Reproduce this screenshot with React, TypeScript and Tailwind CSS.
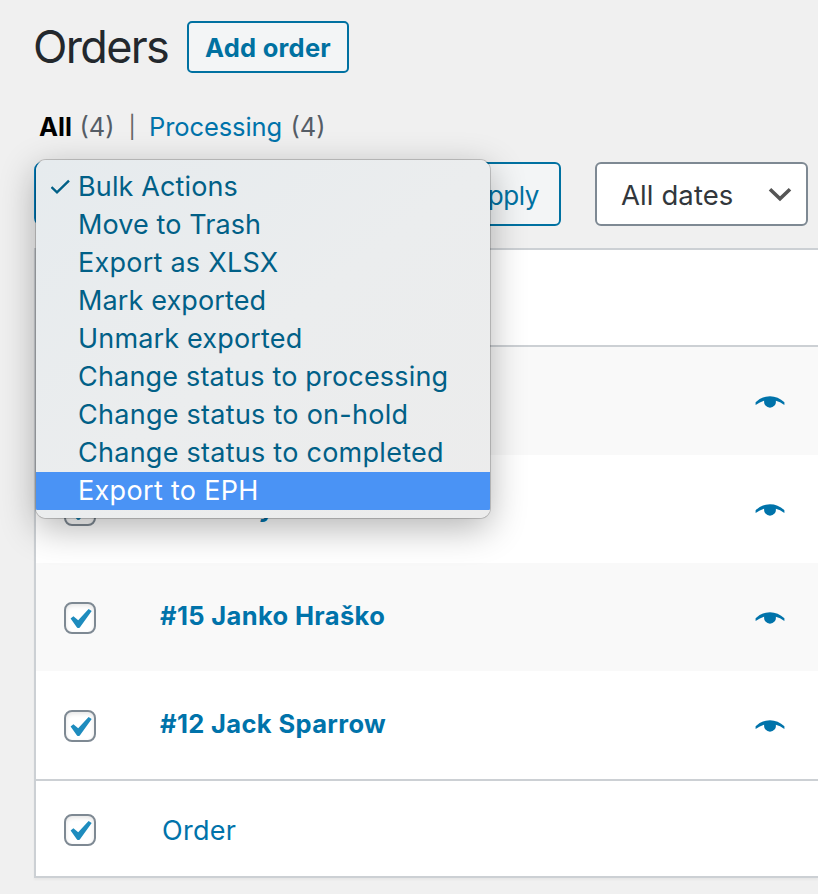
const menuItems = [
  { label: 'Bulk Actions', cls: 'tracking-[0.13px]', checked: true },
  { label: 'Move to Trash', cls: 'tracking-[0.1px]' },
  { label: 'Export as XLSX', cls: 'tracking-[0.25px]' },
  { label: 'Mark exported', cls: 'tracking-[0.13px]' },
  { label: 'Unmark exported', cls: 'tracking-[0.17px]' },
  { label: 'Change status to processing', cls: 'tracking-[0.19px]' },
  { label: 'Change status to on-hold', cls: 'tracking-[0.27px]' },
  { label: 'Change status to completed', cls: 'tracking-[0.26px]' },
  { label: 'Export to EPH', cls: 'tracking-[0.32px]', active: true },
];

const orders = ['', '#16 Johy', '#15 Janko Hraško', '#12 Jack Sparrow'];

function Checkbox() {
  return (
    <span className="ml-7 block h-8 w-8 shrink-0 rounded-lg border-2 border-[#7e8993] bg-white shadow-[inset_0_2px_4px_rgba(0,0,0,0.1)]">
      <svg viewBox="0 0 28 28" className="block h-7 w-7" fill="#1e8cbe">
        <path d="M4.6 14.4 7.4 12.3 12.2 16.3 22.6 4.9 25.7 7 14 23.2Q12.4 25 10.8 23.2Z" />
      </svg>
    </span>
  );
}

function Eye() {
  return (
    <svg viewBox="0 0 30 14" className="block h-[14px] w-[30px]">
      <path d="M.6 6.2Q7 .2 15 .2T29.4 6.2V9Q25 5.8 20.8 4.7A5.9 5.9 0 1 1 9.2 4.7Q5 5.8.6 9Z" fill="#0073aa" />
    </svg>
  );
}

function BulkMenu() {
  return (
    <ul className="absolute -top-1 left-0 z-10 h-[358px] w-[454px] overflow-hidden rounded-[10px] bg-linear-to-br from-[#e6ebee] via-[#ebedee] to-[#ececec] pt-2 shadow-[0_0_0_1px_rgba(0,0,0,0.18),0_10px_36px_rgba(0,0,0,0.3)]">
      {menuItems.map((item) => (
        <li
          key={item.label}
          className={`flex h-[38px] items-center whitespace-nowrap text-[27px] font-[440] ${item.active ? 'bg-[#4a93f5] text-white' : 'text-[#016087]'}`}
        >
          <span className="w-[42px] shrink-0 pl-[15px]">
            {item.checked && (
              <svg viewBox="0 0 20 16" className="h-4 w-5" fill="none" stroke="currentColor" strokeWidth="2.4">
                <path d="M.5 8 6 13.3 18 1.6" />
              </svg>
            )}
          </span>
          <span className={item.cls}>{item.label}</span>
        </li>
      ))}
    </ul>
  );
}

export default function App() {
  return (
    <main className="h-[894px] w-[818px] overflow-hidden bg-[#f0f0f0] pl-[34px] font-['Inter',sans-serif] text-[#32373c]">
      <header className="flex h-[94px] items-start pt-[21px]">
        <h1 className="-ml-px w-[154px] whitespace-nowrap text-[45px] font-[430] leading-[52px] tracking-[-1.65px] text-[#23282d]">
          Orders
        </h1>
        <button className="h-[52px] w-[162px] whitespace-nowrap rounded-[5px] border-2 border-[#0071a1] bg-[#f3f5f6] pt-[2px] text-[25.5px] font-[650] tracking-[0.25px] text-[#0071a1]">
          Add order
        </button>
      </header>

      <nav className="flex h-[68px] items-start whitespace-pre pl-[5px] pt-[14px] text-[25.5px] font-[430] leading-[38px] text-[#555d66]">
        <span className="w-[40.5px] font-[650] text-black">All</span>
        <span className="w-[49px]">(4)</span>
        <span className="w-[20.5px] text-[22px] leading-[39px] text-[#666]">|</span>
        <span className="w-[141.5px] tracking-[-0.1px] text-[#0073aa]">Processing</span>
        <span>(4)</span>
      </nav>

      <div className="flex h-[86px] items-start">
        <div className="relative h-16 w-[421px] rounded-[8px] border-2 border-[#007cba] bg-white">
          <BulkMenu />
        </div>
        <button className="ml-[8px] h-16 w-[98px] rounded-[6px] border-2 border-[#0071a1] bg-[#f3f5f6] pr-5 pt-[2px] text-right text-[26px] font-[440] tracking-[-0.4px] text-[#0071a1]">
          Apply
        </button>
        <div className="ml-[34px] flex h-16 w-[213px] items-center justify-between rounded-[6px] border-2 border-[#7e8993] bg-white pl-[24px] pr-[14px] text-[27.5px]">
          <span className="whitespace-nowrap pt-[3px] font-[440] tracking-[0.1px]">All dates</span>
          <svg viewBox="0 0 24 16" className="h-4 w-6" fill="none" stroke="#555" strokeWidth="3.6">
            <path d="M2 3.3 12 12.8 22 3.3" />
          </svg>
        </div>
      </div>

      <section className="h-[630px] border-y-2 border-l-2 border-[#ccd0d4] bg-white text-[#0073aa] shadow-[0_2px_2px_rgba(0,0,0,0.04)]">
        <div className="h-[97px] border-b-2 border-[#ccd0d4]" />
        {orders.map((title, i) => (
          <div key={i} className={`flex h-[108px] items-start ${i % 2 === 0 ? 'bg-[#f9f9f9]' : 'bg-white'}`}>
            <div className="w-[124px] pt-[39px]">
              <Checkbox />
            </div>
            <strong className="w-[595px] whitespace-nowrap pt-[34px] text-[25.5px] font-[650] leading-[38px] tracking-[0.36px]">
              {title}
            </strong>
            <div className="pt-[49px]">
              <Eye />
            </div>
          </div>
        ))}
        <div className="flex h-[97px] items-center border-t-2 border-[#ccd0d4] pt-[2px]">
          <div className="w-[126px]">
            <Checkbox />
          </div>
          <span className="pt-[3px] text-[27px] font-[440] tracking-[0.3px]">Order</span>
        </div>
      </section>
    </main>
  );
}
